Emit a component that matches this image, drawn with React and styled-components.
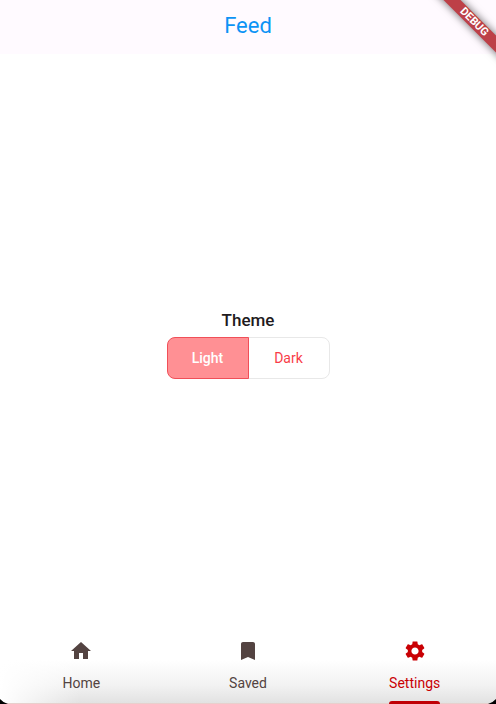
import React, { useState } from "react";
import styled, { createGlobalStyle } from "styled-components";

const GlobalStyle = createGlobalStyle`
  *, *::before, *::after { box-sizing: border-box; }
  body { margin: 0; background: #fff; font-family: Roboto, sans-serif; }
`;

const Page = styled.div`
  position: relative;
  min-height: 100vh;
  display: flex;
  flex-direction: column;
  overflow: hidden;
  background: #fff;
`;

const Header = styled.header`
  display: flex;
  align-items: center;
  justify-content: center;
  height: 54px;
  padding-bottom: 2px;
  background: #fffaff;
`;

const Title = styled.h1`
  margin: 0;
  font-size: 22px;
  line-height: 28px;
  font-weight: 400;
  color: #0c93f5;
`;

const DebugBanner = styled.div`
  position: absolute;
  top: 16px;
  right: -38px;
  width: 120px;
  height: 12px;
  transform: rotate(45deg);
  background: #bd4047;
  box-shadow: 0 0 8px rgba(0, 0, 0, 0.6);
  color: #fff;
  font-size: 11px;
  line-height: 12px;
  font-weight: 700;
  text-align: center;
`;

const Main = styled.main`
  flex: 1;
  display: flex;
  align-items: center;
  justify-content: center;
`;

const ThemeField = styled.fieldset`
  display: flex;
  flex-direction: column;
  align-items: center;
  margin: 0;
  padding: 0;
  border: 0;
`;

const Legend = styled.legend`
  margin: 0 auto;
  padding: 0 0 5px;
  font-size: 17px;
  line-height: 24px;
  font-weight: 500;
  color: #211a1d;
`;

const Toggle = styled.div`
  display: flex;
`;

const ToggleButton = styled.button`
  position: relative;
  z-index: ${(p) => (p.$active ? 1 : 0)};
  width: 82px;
  height: 42px;
  padding: 0;
  font: ${(p) => (p.$active ? 500 : 400)} 14px/20px Roboto, sans-serif;
  color: ${(p) => (p.$active ? "#fff" : "#f83c48")};
  background: ${(p) => (p.$active ? "#ff9094" : "#fff")};
  border: 1px solid ${(p) => (p.$active ? "#f04f58" : "#e8e8e8")};
  cursor: pointer;
  &:first-child { border-radius: 8px 0 0 8px; }
  &:last-child { margin-left: -1px; border-radius: 0 8px 8px 0; }
`;

const Nav = styled.nav`
  position: relative;
  display: grid;
  grid-template-columns: repeat(3, 1fr);
  gap: 4px;
  height: 72px;
  border-bottom: 1px solid #e8cfcc;
  background:
    linear-gradient(to right, #fff, rgba(255, 255, 255, 0) 80px),
    linear-gradient(to bottom, #fff 40%, #f2f2f2 75%, #e2e2e2);
`;

const NavLink = styled.a`
  display: flex;
  flex-direction: column;
  align-items: center;
  gap: 10px;
  padding-top: 7px;
  text-decoration: none;
  font-size: 14px;
  line-height: 20px;
  color: ${(p) => (p.$active ? "#c90004" : "#534341")};
  svg { width: 24px; height: 24px; fill: currentColor; flex: none; }
`;

const NavLabel = styled.span`
  position: relative;
  &::after {
    content: "";
    display: ${(p) => (p.$active ? "block" : "none")};
    position: absolute;
    left: 0;
    right: 0;
    bottom: -11px;
    height: 3px;
    border-radius: 3px 3px 0 0;
    background: #c00006;
  }
`;

const Corner = styled.svg`
  position: absolute;
  bottom: 0;
  ${(p) => (p.$right ? "right: 0; transform: scaleX(-1);" : "left: 0;")}
  width: 8px;
  height: 5px;
`;

const items = [
  { label: "Home", d: "M10 20v-6h4v6h5v-8h3L12 3 2 12h3v8z" },
  { label: "Saved", d: "M17 3H7c-1.100 0-2 .9-2 2v16l7-3 7 3V5c0-1.100-.9-2-2-2z" },
  {
    label: "Settings",
    d: "M19.140 12.940c.04-.3.060-.61.060-.94 0-.32-.02-.64-.07-.94l2.030-1.580c.18-.14.23-.41.120-.61l-1.920-3.320c-.12-.22-.37-.29-.59-.22l-2.390.96c-.5-.38-1.030-.7-1.620-.94l-.36-2.540c-.04-.24-.24-.41-.48-.41h-3.840c-.24 0-.43.17-.47.410l-.36 2.540c-.59.24-1.130.57-1.620.940l-2.390-.96c-.22-.08-.47 0-.59.220L2.740 8.870c-.12.21-.08.47.12.610l2.030 1.580c-.05.3-.09.63-.09.940s.02.64.070.940l-2.030 1.580c-.18.14-.23.41-.12.610l1.920 3.320c.12.22.37.29.59.220l2.390-.96c.5.38 1.030.7 1.620.940l.36 2.540c.05.24.24.41.48.410h3.840c.24 0 .44-.17.47-.41l.36-2.540c.59-.24 1.130-.56 1.620-.94l2.390.96c.22.08.47 0 .59-.22l1.920-3.320c.12-.22.07-.47-.12-.61l-2.010-1.580zM12 15.600c-1.980 0-3.600-1.620-3.600-3.600s1.620-3.600 3.600-3.600 3.600 1.620 3.600 3.600-1.620 3.600-3.600 3.600z",
  },
];

export default function App() {
  const [theme, setTheme] = useState("Light");
  const [tab, setTab] = useState("Settings");
  return (
    <Page>
      <GlobalStyle />
      <Header><Title>Feed</Title></Header>
      <DebugBanner>DEBUG</DebugBanner>
      <Main>
        <ThemeField>
          <Legend>Theme</Legend>
          <Toggle>
            {["Light", "Dark"].map((name) => (
              <ToggleButton key={name} type="button" $active={theme === name} aria-pressed={theme === name} onClick={() => setTheme(name)}>
                {name}
              </ToggleButton>
            ))}
          </Toggle>
        </ThemeField>
      </Main>
      <Nav>
        {items.map(({ label, d }) => (
          <NavLink key={label} href={"#" + label.toLowerCase()} $active={tab === label} aria-current={tab === label ? "page" : undefined} onClick={() => setTab(label)}>
            <svg viewBox="0 0 24 24" aria-hidden="true"><path d={d} /></svg>
            <NavLabel $active={tab === label}>{label}</NavLabel>
          </NavLink>
        ))}
      </Nav>
      <Corner viewBox="0 0 8 5" aria-hidden="true"><path d="M0 0Q3 3.500 8 5H0z" /></Corner>
      <Corner $right viewBox="0 0 8 5" aria-hidden="true"><path d="M0 0Q3 3.500 8 5H0z" /></Corner>
    </Page>
  );
}
